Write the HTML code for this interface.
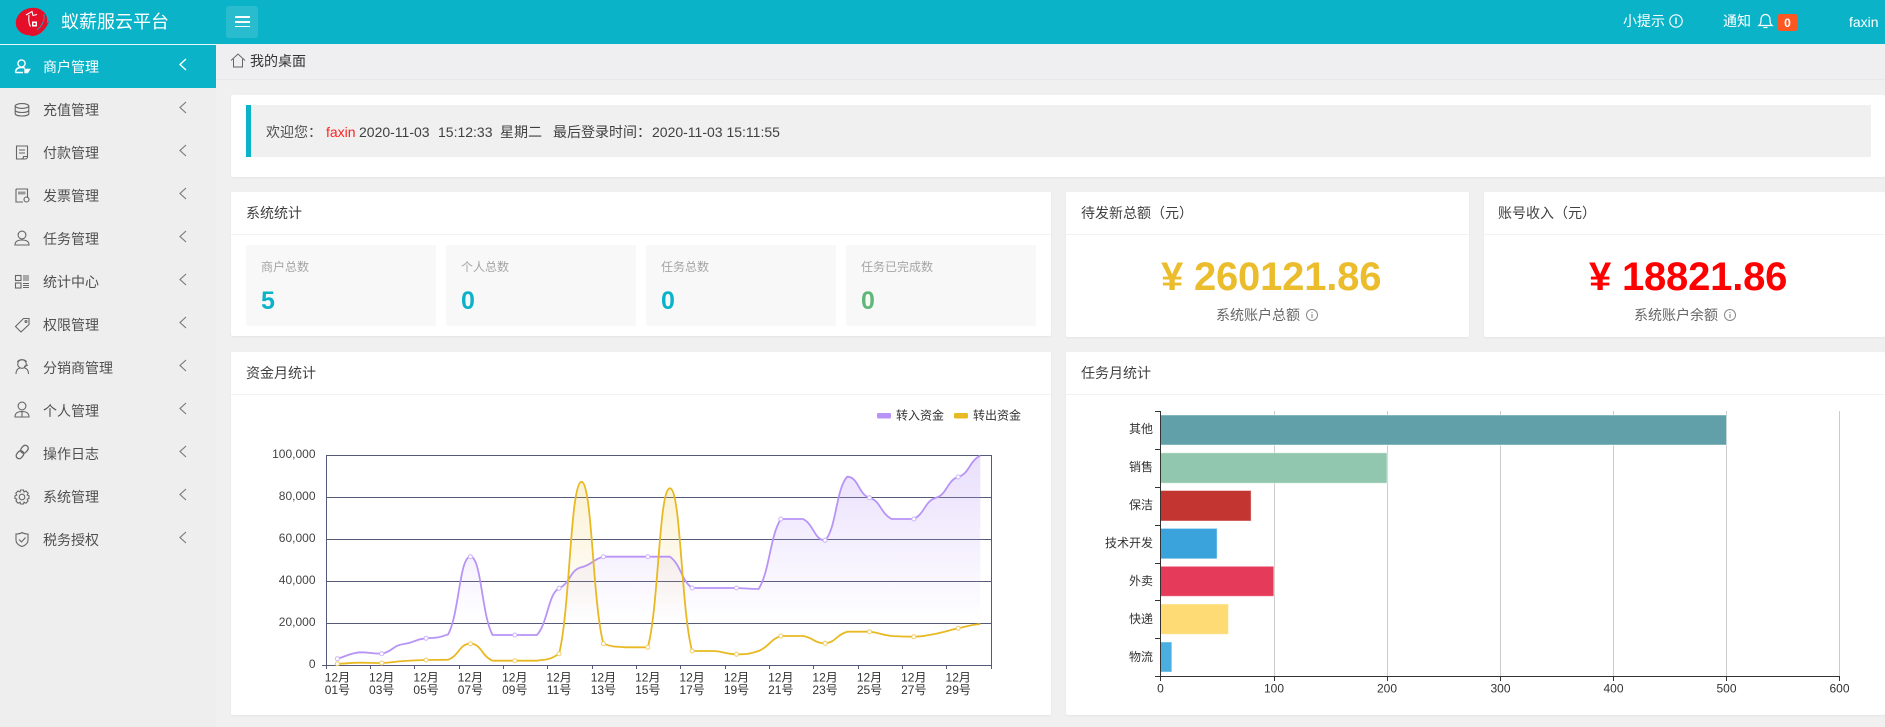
<!DOCTYPE html>
<html lang="zh-CN">
<head>
<meta charset="utf-8">
<title>蚁薪服云平台</title>
<style>
html,body{margin:0;padding:0;width:1885px;height:727px;overflow:hidden;background:#f0f0f0;font-family:"Liberation Sans","Noto Sans CJK SC",sans-serif;color:#404040;font-size:14px}
.a{position:absolute}
.t{position:absolute;white-space:nowrap;line-height:20px;height:20px}
.card{position:absolute;background:#fff;border-radius:2px;box-shadow:0 1px 2px rgba(0,0,0,.05)}
.hl{position:absolute;height:1px;background:#f2f2f2}
.tile{position:absolute;top:245px;height:81px;background:#f8f8f8;border-radius:2px}
.lab{color:#a5a5a5;font-size:12px}
.val{font-size:25px;font-weight:bold;line-height:30px;height:30px}
.big{font-size:40px;font-weight:bold;line-height:50px;height:50px;letter-spacing:-.2px}
.m{color:#505050}
svg{position:absolute;overflow:visible}
svg text{font-family:"Liberation Sans","Noto Sans CJK SC",sans-serif}
</style>
</head>
<body>
<!-- header -->
<div class="a" style="left:0;top:0;width:1885px;height:44px;background:#0ab3c8"></div>
<div class="a" style="left:0;top:44px;width:216px;height:1px;background:#e8f6f8"></div>
<svg style="left:0;top:0" width="80" height="44" viewBox="0 0 80 44">
  <ellipse cx="31.5" cy="21.5" rx="16" ry="13.5" transform="rotate(-18 31.5 21.5)" fill="#e60f2a"/>
  <path d="M30 36 C39 37 46 30 49.5 20 C45 27 40 31 32 34 Z" fill="#e60f2a"/>
  <path d="M26 15 L32 11.5 L33 15.5 L37 14.5 M29 15 C28.5 19 28.5 23 30.5 26.5" fill="none" stroke="#fff" stroke-width="1.1"/>
  <path d="M44 14 C45 20 42 26 37 30" fill="none" stroke="#0ab3c8" stroke-width="1" opacity=".8"/>
  <rect x="32" y="21.5" width="5" height="5" fill="#fff"/>
  <rect x="33.5" y="23" width="2" height="2" fill="#e60f2a"/>
</svg>
<div class="t" style="left:61px;top:10px;font-size:18px;line-height:24px;height:24px;color:#fff">蚁薪服云平台</div>
<div class="a" style="left:226px;top:6px;width:32px;height:32px;border-radius:3px;background:rgba(255,255,255,.13)"></div>
<div class="a" style="left:235px;top:16px;width:15px;height:1.5px;background:#fff"></div>
<div class="a" style="left:235px;top:21px;width:15px;height:1.5px;background:#fff"></div>
<div class="a" style="left:235px;top:25.5px;width:15px;height:1.5px;background:#fff"></div>

<div class="t" style="left:1623px;top:11px;color:#fff">小提示</div>
<svg style="left:1668px;top:13px" width="16" height="16" viewBox="0 0 16 16"><circle cx="8" cy="8" r="6.2" fill="none" stroke="#fff" stroke-width="1.2"/><path d="M8 4.5V11" stroke="#fff" stroke-width="1.4"/></svg>
<div class="t" style="left:1723px;top:11px;color:#fff">通知</div>
<svg style="left:1757px;top:12px" width="17" height="18" viewBox="0 0 17 18"><path d="M2 13.5 C4 12 4 10 4 7.5 C4 4.5 6 2.5 8.5 2.5 C11 2.5 13 4.5 13 7.5 C13 10 13 12 15 13.5 Z M6.5 15.5 H10.5" fill="none" stroke="#fff" stroke-width="1.2"/></svg>
<div class="a" style="left:1778px;top:14px;width:19px;height:17px;border-radius:2px;background:#ff5722;color:#fff;font-size:12px;font-weight:bold;line-height:18px;text-align:center">0</div>
<div class="t" style="left:1849px;top:12px;color:#fff">faxin</div>

<!-- sidebar -->
<div class="a" style="left:0;top:45px;width:216px;height:682px;background:#eee"></div>
<div class="a" style="left:0;top:45px;width:216px;height:43px;background:#0ab3c8"></div>
<div class="t" style="left:43px;top:57px;color:#fff">商户管理</div>
<div class="t m" style="left:43px;top:100px">充值管理</div>
<div class="t m" style="left:43px;top:143px">付款管理</div>
<div class="t m" style="left:43px;top:186px">发票管理</div>
<div class="t m" style="left:43px;top:229px">任务管理</div>
<div class="t m" style="left:43px;top:272px">统计中心</div>
<div class="t m" style="left:43px;top:315px">权限管理</div>
<div class="t m" style="left:43px;top:358px">分销商管理</div>
<div class="t m" style="left:43px;top:401px">个人管理</div>
<div class="t m" style="left:43px;top:444px">操作日志</div>
<div class="t m" style="left:43px;top:487px">系统管理</div>
<div class="t m" style="left:43px;top:530px">税务授权</div>
<svg style="left:0;top:0" width="216" height="727" viewBox="0 0 216 727">
  <!-- chevrons -->
  <path d="M186 59 L180 64.5 L186 70" fill="none" stroke="#fff" stroke-width="1.4"/>
  <g fill="none" stroke="#777" stroke-width="1.1">
    <path d="M186 102 L180 107.5 L186 113"/>
    <path d="M186 145 L180 150.5 L186 156"/>
    <path d="M186 188 L180 193.5 L186 199"/>
    <path d="M186 231 L180 236.5 L186 242"/>
    <path d="M186 274 L180 279.5 L186 285"/>
    <path d="M186 317 L180 322.5 L186 328"/>
    <path d="M186 360 L180 365.5 L186 371"/>
    <path d="M186 403 L180 408.5 L186 414"/>
    <path d="M186 446 L180 451.5 L186 457"/>
    <path d="M186 489 L180 494.5 L186 500"/>
    <path d="M186 532 L180 537.5 L186 543"/>
  </g>
  <!-- active icon -->
  <g fill="none" stroke="#fff" stroke-width="1.4">
    <circle cx="21.5" cy="63.5" r="3.6"/>
    <path d="M15.5 72.5 C15.5 69 18 67.5 21.5 67.5 C23 67.5 24 67.8 25 68.3 M15.5 72.5 H23"/>
    <path d="M25 69.5 H29.5 L27.5 72.5 H25 Z" fill="#fff"/>
  </g>
  <g fill="none" stroke="#666" stroke-width="1.1">
    <!-- database -->
    <ellipse cx="22" cy="106" rx="6.8" ry="2.4"/>
    <path d="M15.2 106 V113.5 C15.2 115 18 116 22 116 C26 116 28.8 115 28.8 113.5 V106 M15.2 110 C15.2 111.5 18 112.5 22 112.5 C26 112.5 28.8 111.5 28.8 110"/>
    <!-- doc -->
    <path d="M16.5 146 H27.5 V157 C27.5 158.5 26 159 25 159 H16.5 Z M19 150 H25 M19 153 H25 M21 159 C23 159 23.5 157.5 23.5 156.5 H27.5"/>
    <!-- invoice -->
    <path d="M16 189 H27.5 V198 M16 189 V202 H23"/>
    <rect x="18" y="191.5" width="7.5" height="3" fill="#999" stroke="none"/>
    <circle cx="26.5" cy="199.5" r="2.5"/>
    <!-- user -->
    <circle cx="22" cy="235" r="3.9"/>
    <path d="M15 245 C15 241.5 17.5 240 22 240 C26.5 240 29 241.5 29 245 Z"/>
    <!-- stats -->
    <rect x="15.5" y="275.5" width="5.5" height="5"/>
    <rect x="15.5" y="283" width="5.5" height="5"/>
    <path d="M23 276 H29 M23 278 H29 M23 280 H29 M23 283.5 H29 M23 285.5 H29 M23 287.5 H29"/>
    <!-- tag -->
    <path d="M15.5 326.5 L23.5 318.5 H29 V324.5 L21 332 Z"/>
    <circle cx="26" cy="321.5" r="1"/>
    <!-- agent -->
    <circle cx="22" cy="364" r="4.3"/>
    <path d="M16 374 C16 370.5 17.5 368.5 20 368 M28.5 374 C28.5 370.5 27 368.5 24.5 368 M17.5 362 C18.5 359 25.5 359 26.5 362 M24 366.5 L28 365"/>
    <!-- person tie -->
    <circle cx="22" cy="406" r="3.9"/>
    <path d="M15 417 C15 413.5 17.5 411.5 22 411.5 C26.5 411.5 29 413.5 29 417 Z M22 412 V416.5"/>
    <!-- link -->
    <g stroke-width="1.3">
      <rect x="21.5" y="445" width="6" height="8.5" rx="3" transform="rotate(40 24.5 449.2)"/>
      <rect x="17" y="450.5" width="6" height="8.5" rx="3" transform="rotate(40 20 454.7)"/>
    </g>
    <!-- gear -->
    <circle cx="22" cy="497" r="2.8"/>
    <path d="M20.5 490 H23.5 L24 492 L26 491 L28.2 493.2 L27.2 495 L29 495.8 V498.5 L27.2 499.2 L28 501 L26 503.2 L24 502.2 L23.5 504 H20.5 L20 502.2 L18 503.2 L16 501 L16.8 499.2 L15 498.5 V495.8 L16.8 495 L15.8 493.2 L18 491 L20 492 Z"/>
    <!-- shield -->
    <path d="M16 534 C19 534 20.5 533.5 22 532.5 C23.5 533.5 25 534 28 534 V540 C28 543.5 25 545.5 22 546.5 C19 545.5 16 543.5 16 540 Z M19 539.5 L21.5 542 L25.5 537.5"/>
  </g>
</svg>

<!-- breadcrumb -->
<div class="a" style="left:216px;top:45px;width:1669px;height:34px;background:#efeef1;border-bottom:1px solid #e8e8e8"></div>
<svg style="left:230px;top:53px" width="16" height="15" viewBox="0 0 16 15"><path d="M1 7.5 L8 1 L15 7.5 M3.5 6 V14 H12.5 V6" fill="none" stroke="#666" stroke-width="1"/></svg>
<div class="t" style="left:250px;top:51px;color:#333">我的桌面</div>

<!-- welcome -->
<div class="card" style="left:231px;top:95px;width:1654px;height:82px"></div>
<div class="a" style="left:246px;top:105px;width:1625px;height:52px;background:#f0f0f0"></div>
<div class="a" style="left:246px;top:105px;width:5px;height:52px;background:#0ab3c8"></div>
<div class="t" style="left:266px;top:122px;font-size:14px;color:#505050">欢迎您：</div>
<div class="t" style="left:326px;top:122px;color:#f22">faxin</div>
<div class="t" style="left:359px;top:122px">2020-11-03</div>
<div class="t" style="left:438px;top:122px">15:12:33</div>
<div class="t" style="left:500px;top:122px">星期二</div>
<div class="t" style="left:553px;top:122px">最后登录时间：</div>
<div class="t" style="left:652px;top:122px">2020-11-03 15:11:55</div>

<!-- stats card -->
<div class="card" style="left:231px;top:192px;width:820px;height:144px"></div>
<div class="hl" style="left:231px;top:234px;width:820px"></div>
<div class="t" style="left:246px;top:203px">系统统计</div>
<div class="tile" style="left:246px;width:190px"></div>
<div class="tile" style="left:446px;width:190px"></div>
<div class="tile" style="left:646px;width:190px"></div>
<div class="tile" style="left:846px;width:190px"></div>
<div class="t lab" style="left:261px;top:257px">商户总数</div>
<div class="t lab" style="left:461px;top:257px">个人总数</div>
<div class="t lab" style="left:661px;top:257px">任务总数</div>
<div class="t lab" style="left:861px;top:257px">任务已完成数</div>
<div class="t val" style="left:261px;top:286px;color:#0ab3c8">5</div>
<div class="t val" style="left:461px;top:286px;color:#0ab3c8">0</div>
<div class="t val" style="left:661px;top:286px;color:#0ab3c8">0</div>
<div class="t val" style="left:861px;top:286px;color:#5fb878">0</div>

<!-- amount cards -->
<div class="card" style="left:1066px;top:192px;width:403px;height:145px"></div>
<div class="hl" style="left:1066px;top:234px;width:403px"></div>
<div class="t" style="left:1081px;top:203px">待发新总额（元）</div>
<div class="t big" style="left:1161px;top:252px;color:#ebbd2c">¥ 260121.86</div>
<div class="t" style="left:1216px;top:305px;color:#666">系统账户总额</div>
<svg style="left:1305px;top:308px" width="14" height="14" viewBox="0 0 14 14"><circle cx="7" cy="7" r="5.5" fill="none" stroke="#888" stroke-width="1"/><path d="M7 4 V4.9 M7 6 V10" stroke="#777" stroke-width="1"/></svg>

<div class="card" style="left:1484px;top:192px;width:401px;height:145px"></div>
<div class="hl" style="left:1484px;top:234px;width:401px"></div>
<div class="t" style="left:1498px;top:203px">账号收入（元）</div>
<div class="t big" style="left:1589px;top:252px;color:#f00">¥ 18821.86</div>
<div class="t" style="left:1634px;top:305px;color:#666">系统账户余额</div>
<svg style="left:1723px;top:308px" width="14" height="14" viewBox="0 0 14 14"><circle cx="7" cy="7" r="5.5" fill="none" stroke="#888" stroke-width="1"/><path d="M7 4 V4.9 M7 6 V10" stroke="#777" stroke-width="1"/></svg>

<!-- chart cards -->
<div class="card" style="left:231px;top:352px;width:820px;height:363px"></div>
<div class="hl" style="left:231px;top:394px;width:820px"></div>
<div class="t" style="left:246px;top:363px">资金月统计</div>
<div class="card" style="left:1066px;top:352px;width:819px;height:363px"></div>
<div class="hl" style="left:1066px;top:394px;width:819px"></div>
<div class="t" style="left:1081px;top:363px">任务月统计</div>

<!-- line chart -->
<svg style="left:0;top:0" width="1885" height="727" viewBox="0 0 1885 727">
  <defs>
    <linearGradient id="gp" gradientUnits="userSpaceOnUse" x1="0" y1="455" x2="0" y2="625"><stop offset="0" stop-color="#b794f6" stop-opacity=".3"/><stop offset="1" stop-color="#b794f6" stop-opacity="0"/></linearGradient>
    <linearGradient id="gg" gradientUnits="userSpaceOnUse" x1="0" y1="480" x2="0" y2="622"><stop offset="0" stop-color="#e8b923" stop-opacity=".2"/><stop offset="1" stop-color="#e8b923" stop-opacity="0"/></linearGradient>
  </defs>
  <!-- grid -->
  <g stroke="#555a78" stroke-width="1" shape-rendering="crispEdges" fill="none">
    <path d="M326 455.5 H991.5 V669"/>
    <path d="M326 497.5 H991 M326 539.5 H991 M326 581.5 H991 M326 623.5 H991 M322 665.5 H991"/>
    <path d="M326.5 455 V669 M370.5 665 V669 M414.5 665 V669 M459.5 665 V669 M503.5 665 V669 M547.5 665 V669 M592.5 665 V669 M636.5 665 V669 M680.5 665 V669 M725.5 665 V669 M769.5 665 V669 M813.5 665 V669 M858.5 665 V669 M902.5 665 V669 M946.5 665 V669"/>
  </g>
  <!-- areas -->
  <path fill="url(#gp)" d="M337.4 658.7 C348.4 655.7 348.6 653.55 359.6 652.3 C370.6 652.3 370.7 653.7 381.7 653.7 C392.7 651.6 392.9 645.2 403.9 644 C414.9 642.8 415.1 639.1 426.1 638.3 C437.1 637.5 437.2 638.3 448.2 634.3 C459.2 613.9 459.4 556.7 470.4 556.7 C481.4 556.7 481.6 615.4 492.6 635 C503.6 635 503.8 635 514.8 635 C525.8 635 525.9 635 536.9 635 C547.9 623.3 548.1 593.3 559.1 588.3 C570.1 583.3 570.3 569.8 581.3 567.3 C592.3 564.8 592.4 559.35 603.4 556.7 C614.4 556.7 614.6 556.7 625.6 556.7 C636.6 556.7 636.8 556.7 647.8 556.7 C658.8 556.7 658.9 556.7 669.9 556.7 C680.9 564.5 681.1 580.2 692.1 588 C703.1 588 703.3 588 714.3 588 C725.3 588 725.5 588 736.5 588 C747.5 588.25 747.6 589 758.6 589 C769.6 571.75 769.8 536.5 780.8 519 C791.8 519 792 519 803 519 C814 524.3 814.1 540.3 825.1 540.3 C836.1 529.7 836.3 487.35 847.3 476.7 C858.3 476.7 858.5 494.7 869.5 497.7 C880.5 500.7 880.7 513.7 891.7 519 C902.7 519 902.8 519 913.8 519 C924.8 513.7 925 500.7 936 497.7 C947 494.7 947.2 480 958.2 477 C969.2 474 969.3 460.7 980.3 455.7 L980.3 665 L337.4 665 Z"/>
  <path fill="url(#gg)" d="M337.4 663.7 C348.4 663.5 348.6 662.9 359.6 662.7 C370.6 662.7 370.7 663 381.7 663 C392.7 662.6 392.9 661.75 403.9 661 C414.9 660.25 415.1 660.33 426.1 660 C437.1 659.67 437.2 660 448.2 659.7 C459.2 655.6 459.4 643.7 470.4 643.7 C481.4 643.7 481.6 656.45 492.6 660.7 C503.6 660.7 503.8 660.7 514.8 660.7 C525.8 660.7 525.9 660.7 536.9 660.7 C547.9 658.95 548.1 660.7 559.1 653.7 C570.1 608.95 570.3 484.2 581.3 481.7 C592.3 481.7 592.4 602.3 603.4 643.7 C614.4 647.3 614.6 646.4 625.6 647.3 C636.6 647.3 636.8 647.3 647.8 647.3 C658.8 607.55 658.9 488.3 669.9 488.3 C680.9 488.3 681.1 610.3 692.1 651 C703.1 651 703.3 651 714.3 651 C725.3 651.8 725.5 654.3 736.5 654.3 C747.5 654.3 747.6 654.3 758.6 651 C769.6 646.4 769.8 639.75 780.8 636 C791.8 636 792 636 803 636 C814 637.8 814.1 643.3 825.1 643.3 C836.1 642.3 836.3 634.6 847.3 631.7 C858.3 631.7 858.5 631.7 869.5 631.7 C880.5 632.8 880.7 634.75 891.7 636 C902.7 636.7 902.8 636.7 913.8 636.7 C924.8 636.1 925 635.8 936 633.7 C947 631.6 947.2 630.7 958.2 628.3 C969.2 625.9 969.3 625 980.3 624 L980.3 665 L337.4 665 Z"/>
  <!-- lines -->
  <path fill="none" stroke="#b794f6" stroke-width="1.8" d="M337.4 658.7 C348.4 655.7 348.6 653.55 359.6 652.3 C370.6 652.3 370.7 653.7 381.7 653.7 C392.7 651.6 392.9 645.2 403.9 644 C414.9 642.8 415.1 639.1 426.1 638.3 C437.1 637.5 437.2 638.3 448.2 634.3 C459.2 613.9 459.4 556.7 470.4 556.7 C481.4 556.7 481.6 615.4 492.6 635 C503.6 635 503.8 635 514.8 635 C525.8 635 525.9 635 536.9 635 C547.9 623.3 548.1 593.3 559.1 588.3 C570.1 583.3 570.3 569.8 581.3 567.3 C592.3 564.8 592.4 559.35 603.4 556.7 C614.4 556.7 614.6 556.7 625.6 556.7 C636.6 556.7 636.8 556.7 647.8 556.7 C658.8 556.7 658.9 556.7 669.9 556.7 C680.9 564.5 681.1 580.2 692.1 588 C703.1 588 703.3 588 714.3 588 C725.3 588 725.5 588 736.5 588 C747.5 588.25 747.6 589 758.6 589 C769.6 571.75 769.8 536.5 780.8 519 C791.8 519 792 519 803 519 C814 524.3 814.1 540.3 825.1 540.3 C836.1 529.7 836.3 487.35 847.3 476.7 C858.3 476.7 858.5 494.7 869.5 497.7 C880.5 500.7 880.7 513.7 891.7 519 C902.7 519 902.8 519 913.8 519 C924.8 513.7 925 500.7 936 497.7 C947 494.7 947.2 480 958.2 477 C969.2 474 969.3 460.7 980.3 455.7"/>
  <path fill="none" stroke="#e8b923" stroke-width="1.8" d="M337.4 663.7 C348.4 663.5 348.6 662.9 359.6 662.7 C370.6 662.7 370.7 663 381.7 663 C392.7 662.6 392.9 661.75 403.9 661 C414.9 660.25 415.1 660.33 426.1 660 C437.1 659.67 437.2 660 448.2 659.7 C459.2 655.6 459.4 643.7 470.4 643.7 C481.4 643.7 481.6 656.45 492.6 660.7 C503.6 660.7 503.8 660.7 514.8 660.7 C525.8 660.7 525.9 660.7 536.9 660.7 C547.9 658.95 548.1 660.7 559.1 653.7 C570.1 608.95 570.3 484.2 581.3 481.7 C592.3 481.7 592.4 602.3 603.4 643.7 C614.4 647.3 614.6 646.4 625.6 647.3 C636.6 647.3 636.8 647.3 647.8 647.3 C658.8 607.55 658.9 488.3 669.9 488.3 C680.9 488.3 681.1 610.3 692.1 651 C703.1 651 703.3 651 714.3 651 C725.3 651.8 725.5 654.3 736.5 654.3 C747.5 654.3 747.6 654.3 758.6 651 C769.6 646.4 769.8 639.75 780.8 636 C791.8 636 792 636 803 636 C814 637.8 814.1 643.3 825.1 643.3 C836.1 642.3 836.3 634.6 847.3 631.7 C858.3 631.7 858.5 631.7 869.5 631.7 C880.5 632.8 880.7 634.75 891.7 636 C902.7 636.7 902.8 636.7 913.8 636.7 C924.8 636.1 925 635.8 936 633.7 C947 631.6 947.2 630.7 958.2 628.3 C969.2 625.9 969.3 625 980.3 624"/>
  <!-- dots -->
  <g fill="#fff" stroke="#cdb5f8" stroke-width="1">
    <circle cx="337.4" cy="658.7" r="2"/><circle cx="381.7" cy="653.7" r="2"/><circle cx="426.1" cy="638.3" r="2"/><circle cx="470.4" cy="556.7" r="2"/><circle cx="514.8" cy="635" r="2"/><circle cx="559.1" cy="588.3" r="2"/><circle cx="603.4" cy="556.7" r="2"/><circle cx="647.8" cy="556.7" r="2"/><circle cx="692.1" cy="588" r="2"/><circle cx="736.5" cy="588" r="2"/><circle cx="780.8" cy="519" r="2"/><circle cx="825.1" cy="540.3" r="2"/><circle cx="869.5" cy="497.7" r="2"/><circle cx="913.8" cy="519" r="2"/><circle cx="958.2" cy="477" r="2"/>
  </g>
  <g fill="#fff" stroke="#efcf6a" stroke-width="1">
    <circle cx="337.4" cy="663.7" r="2"/><circle cx="381.7" cy="663" r="2"/><circle cx="426.1" cy="660" r="2"/><circle cx="470.4" cy="643.7" r="2"/><circle cx="514.8" cy="660.7" r="2"/><circle cx="559.1" cy="653.7" r="2"/><circle cx="603.4" cy="643.7" r="2"/><circle cx="647.8" cy="647.3" r="2"/><circle cx="692.1" cy="651" r="2"/><circle cx="736.5" cy="654.3" r="2"/><circle cx="780.8" cy="636" r="2"/><circle cx="825.1" cy="643.3" r="2"/><circle cx="869.5" cy="631.7" r="2"/><circle cx="913.8" cy="636.7" r="2"/><circle cx="958.2" cy="628.3" r="2"/>
  </g>
  <!-- y labels -->
  <g font-size="12" fill="#444" text-anchor="end">
    <text x="315.5" y="458">100,000</text><text x="315.5" y="500">80,000</text><text x="315.5" y="542">60,000</text><text x="315.5" y="584">40,000</text><text x="315.5" y="626">20,000</text><text x="315.5" y="668">0</text>
  </g>
  <!-- x labels -->
  <g font-size="12" fill="#333" text-anchor="middle">
    <text x="337.4" y="681.5">12月</text><text x="337.4" y="694">01号</text>
    <text x="381.7" y="681.5">12月</text><text x="381.7" y="694">03号</text>
    <text x="426.1" y="681.5">12月</text><text x="426.1" y="694">05号</text>
    <text x="470.4" y="681.5">12月</text><text x="470.4" y="694">07号</text>
    <text x="514.8" y="681.5">12月</text><text x="514.8" y="694">09号</text>
    <text x="559.1" y="681.5">12月</text><text x="559.1" y="694">11号</text>
    <text x="603.4" y="681.5">12月</text><text x="603.4" y="694">13号</text>
    <text x="647.8" y="681.5">12月</text><text x="647.8" y="694">15号</text>
    <text x="692.1" y="681.5">12月</text><text x="692.1" y="694">17号</text>
    <text x="736.5" y="681.5">12月</text><text x="736.5" y="694">19号</text>
    <text x="780.8" y="681.5">12月</text><text x="780.8" y="694">21号</text>
    <text x="825.1" y="681.5">12月</text><text x="825.1" y="694">23号</text>
    <text x="869.5" y="681.5">12月</text><text x="869.5" y="694">25号</text>
    <text x="913.8" y="681.5">12月</text><text x="913.8" y="694">27号</text>
    <text x="958.2" y="681.5">12月</text><text x="958.2" y="694">29号</text>
  </g>
  <!-- legend -->
  <rect x="877" y="413" width="14" height="5.5" rx="1.5" fill="#b794f6"/>
  <text x="896" y="419.5" font-size="12" fill="#333">转入资金</text>
  <rect x="954" y="413" width="14" height="5.5" rx="1.5" fill="#e8b923"/>
  <text x="973" y="419.5" font-size="12" fill="#333">转出资金</text>

  <!-- bar chart -->
  <g stroke="#ccc" stroke-width="1" shape-rendering="crispEdges">
    <path d="M1274.5 411 V676 M1387.5 411 V676 M1500.5 411 V676 M1613.5 411 V676 M1726.5 411 V676 M1839.5 411 V676"/>
  </g>
  <g stroke-width="1" stroke-opacity=".45" stroke="#fff">
    <rect x="1160.5" y="415" width="566" height="30" fill="#61a0a8"/>
    <rect x="1160.5" y="452.8" width="226.5" height="30.4" fill="#91c7ae"/>
    <rect x="1160.5" y="490.5" width="90.6" height="30.5" fill="#c23531"/>
    <rect x="1160.5" y="528.4" width="56.6" height="30.4" fill="#3ba3dc"/>
    <rect x="1160.5" y="566.3" width="113.3" height="30" fill="#e63a5a"/>
    <rect x="1160.5" y="604" width="68" height="30.3" fill="#ffdb75"/>
    <rect x="1160.5" y="642" width="11.3" height="30" fill="#4aaee0"/>
  </g>
  <g stroke="#333" stroke-width="1.2" shape-rendering="crispEdges" fill="none">
    <path d="M1160.5 411 V677 M1155 411.5 H1160 M1155 449.5 H1160 M1155 487.5 H1160 M1155 525.5 H1160 M1155 563.5 H1160 M1155 600.5 H1160 M1155 638.5 H1160 M1155 676.5 H1840"/>
    <path d="M1160.5 677 V681 M1274.5 677 V681 M1387.5 677 V681 M1500.5 677 V681 M1613.5 677 V681 M1726.5 677 V681 M1839.5 677 V681"/>
  </g>
  <g font-size="12" fill="#333" text-anchor="end">
    <text x="1153" y="433">其他</text><text x="1153" y="471">销售</text><text x="1153" y="509">保洁</text><text x="1153" y="547">技术开发</text><text x="1153" y="585">外卖</text><text x="1153" y="623">快递</text><text x="1153" y="661">物流</text>
  </g>
  <g font-size="12" fill="#333" text-anchor="middle">
    <text x="1160.5" y="692.5">0</text><text x="1274" y="692.5">100</text><text x="1387" y="692.5">200</text><text x="1500.5" y="692.5">300</text><text x="1613.5" y="692.5">400</text><text x="1726.5" y="692.5">500</text><text x="1839.5" y="692.5">600</text>
  </g>
</svg>
</body>
</html>
